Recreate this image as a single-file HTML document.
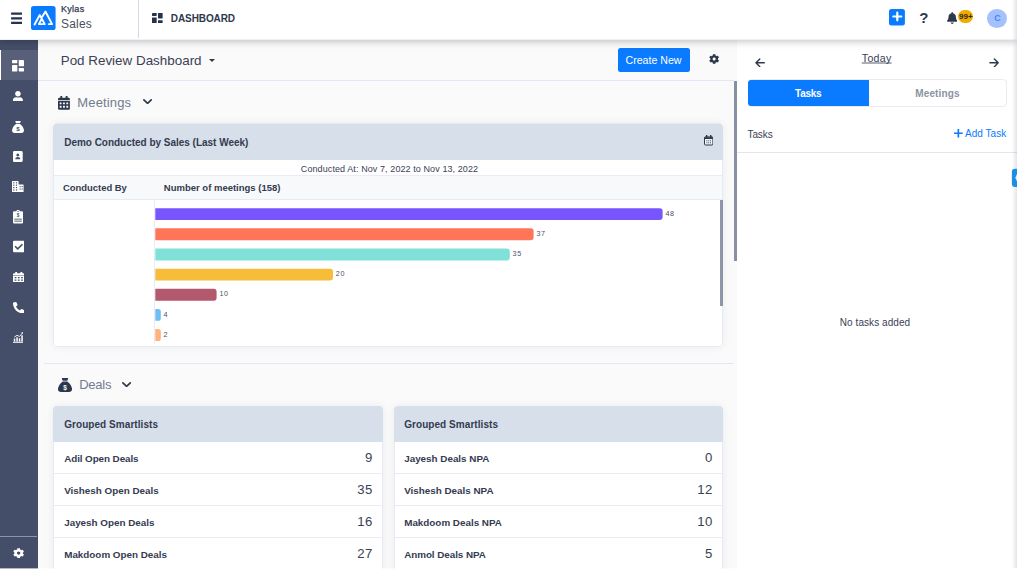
<!DOCTYPE html>
<html lang="en">
<head>
<meta charset="utf-8">
<title>Kylas Sales - Dashboard</title>
<style>
*{box-sizing:border-box;margin:0;padding:0}
html,body{width:1024px;height:585px;overflow:hidden;background:#fff}
body{font-family:"Liberation Sans",sans-serif;color:#2e384d;position:relative}
#app{position:absolute;left:0;top:0;width:1017px;height:569px;overflow:hidden;background:#fff}
.abs{position:absolute}
/* header */
#hdr{position:absolute;left:0;top:0;width:1017px;height:40px;background:#fff;border-bottom:1px solid #eff1fc;z-index:5;box-shadow:0 2px 7px rgba(0,0,0,.22)}
#hdr .burger{position:absolute;left:11px;top:12.5px;width:11px;height:11.5px}
#hdr .burger i{position:absolute;left:0;width:11px;height:2.100px;background:#2e384d;border-radius:.5px}
#logo{position:absolute;left:31px;top:6px;width:25px;height:24px;border-radius:3px;background:#0a7aff}
.brand1{position:absolute;left:61px;top:2.6px;font-size:9px;line-height:12px;color:#2e384d;letter-spacing:.28px;-webkit-text-stroke:.25px #2e384d}
.brand2{position:absolute;left:61px;top:15.6px;font-size:12px;line-height:16px;color:#4a5060;letter-spacing:.2px}
.vdiv{position:absolute;left:138px;top:0;width:1px;height:38px;background:#d5d8e6}
.dashico{position:absolute;left:152px;top:12.5px;width:11px;height:10.5px}
.dashtxt{position:absolute;left:170.8px;top:13px;font-size:10px;line-height:12px;font-weight:bold;color:#2e384d;letter-spacing:-.09px}
/* sidebar */
#side{position:absolute;left:0;top:40px;width:38px;height:529px;background:#454e68}
#side .act{position:absolute;left:0;top:10px;width:38px;height:30px;background:#586079;border-left:1.5px solid #fff}
#side .sep{position:absolute;left:0;top:496px;width:37px;height:1px;background:#8d94a8}
/* main */
#main{position:absolute;left:38px;top:40px;width:699px;height:529px;background:#fafafa}
#right{position:absolute;left:737px;top:40px;width:280px;height:528px;background:#fff}
.hline{position:absolute;height:1px;background:#e3e6f4}
.title{position:absolute;left:60.700px;top:52px;font-size:13.4px;line-height:18px;color:#3a4156;letter-spacing:.01px}
.sect{position:absolute;font-size:13px;line-height:18px;color:#737b8f}
.btn{position:absolute;left:617.5px;top:48px;width:72px;height:24px;border-radius:2.5px;background:#0a7aff;color:#fff;font-size:10.6px;line-height:25px;text-align:center}
.card{position:absolute;background:#fff;border-radius:4px;overflow:hidden;box-shadow:0 0 8px rgba(30,40,70,.07)}
.card>.in{position:absolute;left:1px;top:1px;right:1px;bottom:1px}
.card>.bd{position:absolute;left:0;right:0;bottom:0;border:1px solid #e6e9f6;border-top:0;border-radius:0 0 4px 4px}
.card .ch{position:absolute;left:-1px;top:-1px;right:-1px;background:#d6dfea}
.ch span{position:absolute;left:10.2px;font-size:10px;font-weight:bold;color:#343b50;white-space:nowrap}
.row{position:absolute;left:0;right:0;height:32px;border-top:1px solid #e9ecf7}
.row b{position:absolute;left:9.200px;top:11px;font-size:9.85px;line-height:12px;color:#343b50;white-space:nowrap}
.row em{position:absolute;right:9.200px;top:8px;font-style:normal;letter-spacing:.4px;font-size:13.2px;line-height:16px;color:#3a4156}
.bar{position:absolute;left:155.5px;height:12px;border-radius:0 3px 3px 0}
.bl{position:absolute;font-size:7.2px;line-height:10px;color:#4a5166;letter-spacing:.7px}
.sh .row b{left:10.200px}
.sh .ch span{left:11.200px}
</style>
</head>
<body>
<div id="app">
  <div id="main"></div>
  <div id="right"></div>

  <!-- main content (page coordinates) -->
  <div class="title">Pod Review Dashboard</div>
  <div class="abs" style="left:208.800px;top:59.400px;width:0;height:0;border-left:3.300px solid transparent;border-right:3.300px solid transparent;border-top:3.200px solid #2e384d"></div>
  <div class="btn">Create New</div>
  <div class="hline" style="left:38px;top:80px;width:696px"></div>
  <div class="abs" style="left:734px;top:81px;width:3px;height:180px;background:#8a90a4"></div>

  <div class="sect" style="left:77.3px;top:93.6px;letter-spacing:.15px">Meetings</div>

  <div class="card sh" style="left:53px;top:123px;width:670px;height:224px;border-radius:5px"><div class="in" style="top:2px">
    <div class="ch" style="height:37px;top:-2px;border-top:1px solid #e6ebf2"><span style="top:13px;line-height:12px;letter-spacing:-.02px">Demo Conducted by Sales (Last Week)</span></div>
    <div class="abs" style="left:0;right:0;top:35.700px;height:16px;padding-left:3px;text-align:center;font-size:9px;letter-spacing:.09px;line-height:16px;color:#3a4156">Conducted At: Nov 7, 2022 to Nov 13, 2022</div>
    <div class="abs" style="left:0;right:0;top:50px;height:25px;background:#f8f9fb;border-top:1px solid #e9ecf7;border-bottom:1px solid #e9ecf7"></div>
    <div class="abs" style="left:8.900px;top:57px;font-size:9.450px;line-height:12px;font-weight:bold;color:#343b50">Conducted By</div>
    <div class="abs" style="left:109.800px;top:57px;font-size:9.500px;line-height:12px;font-weight:bold;color:#343b50">Number of meetings (158)</div>
    <div class="abs" style="left:100px;top:75px;width:1px;height:144px;background:#e9ecf7"></div>
  </div><div class="bd" style="top:37px"></div></div>
  <svg class="abs" style="left:150px;top:200px" width="530" height="146" viewBox="150 200 530 146">
    <path fill="#7856ff" d="M155.3 208.20H659.60a3 3 0 0 1 3 3v5.90a3 3 0 0 1 -3 3H155.3z"/>
    <path fill="#ff7557" d="M155.3 228.35H530.60a3 3 0 0 1 3 3v5.90a3 3 0 0 1 -3 3H155.3z"/>
    <path fill="#80e1d9" d="M155.3 248.50H506.80a3 3 0 0 1 3 3v5.90a3 3 0 0 1 -3 3H155.3z"/>
    <path fill="#f8bc3b" d="M155.3 268.65H330.00a3 3 0 0 1 3 3v5.90a3 3 0 0 1 -3 3H155.3z"/>
    <path fill="#b2596e" d="M155.3 288.80H213.60a3 3 0 0 1 3 3v5.90a3 3 0 0 1 -3 3H155.3z"/>
    <path fill="#72bef4" d="M155.3 308.95H158.20a2.6 2.6 0 0 1 2.6 2.6v6.70a2.6 2.6 0 0 1 -2.6 2.6H155.3z"/>
    <path fill="#ffb27a" d="M155.3 329.10H158.20a2.6 2.6 0 0 1 2.6 2.6v6.70a2.6 2.6 0 0 1 -2.6 2.6H155.3z"/>
  </svg>
  <div class="bl" style="left:665.4px;top:208.7px">48</div>
  <div class="bl" style="left:536.4px;top:228.7px">37</div>
  <div class="bl" style="left:512.6px;top:248.7px">35</div>
  <div class="bl" style="left:335.8px;top:268.7px">20</div>
  <div class="bl" style="left:219.4px;top:288.7px">10</div>
  <div class="bl" style="left:163.6px;top:309.7px">4</div>
  <div class="bl" style="left:163.6px;top:329.7px">2</div>
  <div class="abs" style="left:720px;top:200px;width:3px;height:106px;background:#8f95a9"></div>

  <div class="hline" style="left:44px;top:363px;width:690px"></div>
  <div class="sect" style="left:79.2px;top:375.8px;letter-spacing:-.26px">Deals</div>

  <div class="card sh" style="left:53px;top:406px;width:330px;height:180px"><div class="in">
    <div class="ch" style="height:36px"><span style="top:13px;line-height:12px;font-size:10px;letter-spacing:.06px">Grouped Smartlists</span></div>
    <div class="row" style="top:34px;border-top-color:transparent"><b style="letter-spacing:-.08px">Adil Open Deals</b><em>9</em></div>
    <div class="row" style="top:66px"><b>Vishesh Open Deals</b><em>35</em></div>
    <div class="row" style="top:98px"><b>Jayesh Open Deals</b><em>16</em></div>
    <div class="row" style="top:130px"><b>Makdoom Open Deals</b><em>27</em></div>
  </div><div class="bd" style="top:36px"></div></div>
  <div class="card" style="left:394px;top:406px;width:329px;height:180px"><div class="in">
    <div class="ch" style="height:36px"><span style="top:13px;line-height:12px;font-size:10px;letter-spacing:.06px">Grouped Smartlists</span></div>
    <div class="row" style="top:34px;border-top-color:transparent"><b>Jayesh Deals NPA</b><em>0</em></div>
    <div class="row" style="top:66px"><b>Vishesh Deals NPA</b><em>12</em></div>
    <div class="row" style="top:98px"><b>Makdoom Deals NPA</b><em>10</em></div>
    <div class="row" style="top:130px"><b style="letter-spacing:-.05px">Anmol Deals NPA</b><em>5</em></div>
  </div><div class="bd" style="top:36px"></div></div>

  <svg class="abs" style="left:708.6px;top:54.4px" width="10.3" height="10.1" viewBox="0 0 512 512" preserveAspectRatio="none"><path fill="#2e384d" d="M487.4 315.7l-42.6-24.6c4.3-23.2 4.3-47 0-70.2l42.6-24.6c4.9-2.8 7.1-8.600 5.500-14-11.100-35.600-30-67.800-54.700-94.600-3.800-4.100-10-5.100-14.800-2.300L380.800 110c-17.900-15.400-38.500-27.300-60.800-35.100V25.800c0-5.600-3.900-10.500-9.400-11.700-36.700-8.200-74.300-7.800-109.200 0-5.500 1.200-9.400 6.100-9.400 11.700V75c-22.200 7.900-42.800 19.800-60.800 35.100L88.700 85.500c-4.900-2.800-11-1.900-14.800 2.300-24.700 26.700-43.600 58.900-54.700 94.600-1.700 5.400.6 11.200 5.500 14L67.300 221c-4.300 23.200-4.300 47 0 70.200l-42.600 24.600c-4.900 2.800-7.100 8.600-5.500 14 11.100 35.600 30 67.800 54.700 94.600 3.800 4.100 10 5.100 14.800 2.300l42.600-24.600c17.900 15.400 38.500 27.300 60.800 35.100v49.200c0 5.600 3.900 10.500 9.400 11.700 36.700 8.200 74.300 7.800 109.200 0 5.500-1.200 9.400-6.100 9.400-11.700v-49.200c22.200-7.900 42.800-19.800 60.800-35.100l42.600 24.600c4.900 2.800 11 1.900 14.800-2.300 24.700-26.700 43.600-58.900 54.700-94.600 1.500-5.500-.7-11.300-5.600-14.100zM256 336c-44.100 0-80-35.900-80-80s35.900-80 80-80 80 35.900 80 80-35.900 80-80 80z"/></svg>
  <svg class="abs" style="left:58px;top:96px" width="11.9" height="13.7" viewBox="0 0 12 14" preserveAspectRatio="none"><path fill="#2e384d" d="M2.6 0h1.4a.3.3 0 0 1 .3.3V1.700h3.400V.3a.3.3 0 0 1 .3-.3h1.400a.3.300 0 0 1 .3.300V1.700h1.000A1.300 1.300 0 0 1 12 3v1.300H0V3a1.300 1.300 0 0 1 1.300-1.300h1V.3a.3.300 0 0 1 .3-.3zM0 5.100h12v7.600A1.300 1.300 0 0 1 10.700 14H1.300A1.300 1.300 0 0 1 0 12.700z"/><rect x="1.7" y="6.6" width="1.900" height="1.900" rx=".25" fill="#f8f9fa"/><rect x="5.05" y="6.6" width="1.900" height="1.900" rx=".25" fill="#f8f9fa"/><rect x="8.4" y="6.6" width="1.900" height="1.900" rx=".25" fill="#f8f9fa"/><rect x="1.7" y="10.0" width="1.900" height="1.900" rx=".25" fill="#f8f9fa"/><rect x="5.05" y="10.0" width="1.900" height="1.900" rx=".25" fill="#f8f9fa"/><rect x="8.4" y="10.0" width="1.900" height="1.900" rx=".25" fill="#f8f9fa"/></svg>
  <svg class="abs" style="left:142.6px;top:99.1px" width="9.1" height="5.3" viewBox="0 0 9.100 5.300" ><path d="M.900.900L4.550 4.300L8.200.900" fill="none" stroke="#2e384d" stroke-width="1.700" stroke-linecap="round" stroke-linejoin="round"/></svg>
  <svg class="abs" style="left:58px;top:378px" width="14" height="14" viewBox="0 0 12 12" ><path fill="#2e384d" d="M3.600 0h4.800c.300 0 .450.300.300.550L7.900 2.300H4.100L3.300.55C3.150.3 3.300 0 3.600 0z"/><path fill="#2e384d" d="M4.000 3.000h4.000C9.800 4.300 12 7.100 12 9.600c0 1.500-1.100 2.400-2.500 2.400h-7C1.100 12 0 11.100 0 9.600 0 7.100 2.200 4.300 4.000 3.000z"/><text x="6" y="10.100" font-family="Liberation Sans, sans-serif" font-weight="bold" font-size="5.600" text-anchor="middle" fill="#f8f9fa">$</text></svg>
  <svg class="abs" style="left:121.7px;top:381.5px" width="9.2" height="5.4" viewBox="0 0 9.100 5.300" preserveAspectRatio="none"><path d="M.900.900L4.550 4.300L8.200.900" fill="none" stroke="#2e384d" stroke-width="1.700" stroke-linecap="round" stroke-linejoin="round"/></svg>
  <svg class="abs" style="left:703.900px;top:135.200px" width="9.400" height="10.500" viewBox="0 0 9.400 10.500"><rect x=".500" y="1.900" width="8.400" height="8.100" rx=".900" fill="#f0f4f9" stroke="#2e384d" stroke-width="1"/><path fill="#2e384d" d="M.500 2.200h8.400v1.700H.500zM2.100 0l1.300 0v2.200H1.700zM6 0h1.300l.400 2.200H6z"/><rect x="2.4" y="5.3" width="1" height="1" fill="#4a5470"/><rect x="4.2" y="5.3" width="1" height="1" fill="#4a5470"/><rect x="6" y="5.3" width="1" height="1" fill="#4a5470"/><rect x="2.4" y="7.3" width="1" height="1" fill="#4a5470"/><rect x="4.2" y="7.3" width="1" height="1" fill="#4a5470"/><rect x="6" y="7.3" width="1" height="1" fill="#4a5470"/></svg>
  <svg class="abs" style="left:755px;top:57.7px" width="10.2" height="9.6" viewBox="0 0 10.200 9.600" ><path d="M9.300 4.800H1.200M4.800.900L1 4.800L4.800 8.700" fill="none" stroke="#2e384d" stroke-width="1.400" stroke-linecap="round" stroke-linejoin="round"/></svg>
  <svg class="abs" style="left:989px;top:57.7px" width="10.2" height="9.6" viewBox="0 0 10.200 9.600" ><g transform="translate(10.200 0) scale(-1 1)"><path d="M9.300 4.800H1.200M4.800.900L1 4.800L4.800 8.700" fill="none" stroke="#2e384d" stroke-width="1.400" stroke-linecap="round" stroke-linejoin="round"/></g></svg>
  <svg class="abs" style="left:954.1px;top:129.2px" width="8.7" height="8.5" viewBox="0 0 8.700 8.500" ><path d="M0 4.250h8.700M4.350 0v8.500" stroke="#0a7bff" stroke-width="1.700"/></svg>
  <!-- right panel -->
  <div class="abs" style="left:861.8px;top:51.2px;font-size:10.6px;letter-spacing:.3px;line-height:14px;color:#3a4156;text-decoration:underline;text-decoration-color:rgba(58,65,86,.42);text-decoration-thickness:1.700px;text-underline-offset:.200px;text-decoration-skip-ink:none">Today</div>
  <div class="abs" style="left:748px;top:79px;width:259px;height:28px;border:1px solid #e9ebf0;border-radius:4px;background:#fff"></div>
  <div class="abs" style="left:748px;top:80px;width:120.5px;height:26px;border-radius:3px 0 0 3px;background:#0a7aff;color:#fff;font-weight:bold;font-size:10px;letter-spacing:-.25px;line-height:28px;text-align:center">Tasks</div>
  <div class="abs" style="left:868.5px;top:80px;width:138px;height:26px;color:#8b93a2;font-weight:bold;font-size:10px;letter-spacing:.15px;line-height:28px;text-align:center">Meetings</div>
  <div class="abs" style="left:747.500px;top:128px;letter-spacing:-.1px;font-size:10px;line-height:14px;color:#3a4156">Tasks</div>
  <div class="abs" style="left:965px;top:127px;font-size:10px;letter-spacing:.04px;line-height:14px;color:#0a7aff">Add Task</div>
  <div class="abs" style="left:737px;top:152px;width:280px;height:1px;background:#e3e5ea"></div>
  <div class="abs" style="left:737px;top:315.8px;width:276px;text-align:center;font-size:10px;letter-spacing:.06px;line-height:14px;color:#3a4156">No tasks added</div>
  <svg class="abs" style="left:1011px;top:168px;z-index:10" width="6" height="20" viewBox="1011 168 6 20"><path fill="#1b8fe4" d="M1017 168.700h-2.100a3 3 0 0 0 -3 3v12.200a3 3 0 0 0 3 3h2.100v-5.400l-1.700 -3.700l1.700 -3.700z"/></svg>
  <div class="abs" style="left:1012px;top:0;width:5px;height:568px;z-index:9;background:linear-gradient(90deg,rgba(60,70,110,0),rgba(60,70,110,.14))"></div>
  <div id="side">
    <div class="act"></div>
    <div class="sep"></div>
    <svg class="abs" style="left:12.3px;top:20.300px" width="12" height="11.400" viewBox="0 0 10.650 10.100" preserveAspectRatio="none"><rect x="0" y="0" width="4.700" height="2.900" rx=".400" fill="#fff"/><rect x="0" y="4.400" width="4.700" height="5.700" rx=".400" fill="#fff"/><rect x="6" y="0" width="4.650" height="5.450" rx=".400" fill="#fff"/><rect x="6" y="7.200" width="4.650" height="2.900" rx=".400" fill="#fff"/></svg>
    <svg class="abs" style="left:13.4px;top:50.6px" width="9.9" height="10.9" viewBox="0 0 448 512" preserveAspectRatio="none"><path fill="#fff" d="M224 256c70.7 0 128-57.3 128-128S294.7 0 224 0 96 57.3 96 128s57.3 128 128 128zm89.6 32h-16.7c-22.2 10.2-46.9 16-72.9 16s-50.6-5.8-72.9-16h-16.7C60.2 288 0 348.2 0 422.400V464c0 26.5 21.5 48 48 48h352c26.500 0 48-21.5 48-48v-41.600c0-74.200-60.200-134.400-134.400-134.400z"/></svg>
    <svg class="abs" style="left:12.2px;top:80.7px" width="12" height="12" viewBox="0 0 12 12" ><path fill="#fff" d="M3.600 0h4.800c.300 0 .450.300.300.550L7.900 2.300H4.100L3.300.55C3.150.3 3.300 0 3.600 0z"/><path fill="#fff" d="M4.000 3.000h4.000C9.800 4.300 12 7.100 12 9.600c0 1.500-1.100 2.400-2.500 2.400h-7C1.100 12 0 11.100 0 9.600 0 7.100 2.200 4.300 4.000 3.000z"/><text x="6" y="10.300" font-family="Liberation Sans, sans-serif" font-weight="bold" font-size="6.200" text-anchor="middle" fill="#454e68">$</text></svg>
    <svg class="abs" style="left:13px;top:110.8px" width="10.2" height="11" viewBox="0 0 10.200 11" ><path fill="#fff" d="M1.300 0h7A1.300 1.300 0 0 1 9.600 1.300v8.400A1.300 1.300 0 0 1 8.300 11h-7A1.300 1.300 0 0 1 0 9.700V1.300A1.300 1.300 0 0 1 1.300 0z"/><path fill="#fff" d="M9.600 1.400h.300a.300.300 0 0 1 .300.300v1.700a.300.300 0 0 1-.300.300h-.300zM9.600 4.300h.300a.300.300 0 0 1 .300.300v1.700a.300.300 0 0 1-.300.300h-.300zM9.600 7.200h.300a.300.300 0 0 1 .300.300v1.700a.300.300 0 0 1-.300.300h-.300z"/><circle cx="4.800" cy="4.100" r="1.500" fill="#454e68"/><path fill="#454e68" d="M2.300 8.300c0-1.500 1-2.200 2.500-2.200s2.500.700 2.500 2.200z"/></svg>
    <svg class="abs" style="left:12.4px;top:141px" width="11.6" height="10.9" viewBox="0 0 11.600 10.900" ><path fill="#fff" d="M.400 0h5.800a.400.400 0 0 1 .400.400V3.600h4.600a.400.400 0 0 1 .400.400v6.900H0V.400A.400.400 0 0 1 .400 0z"/><rect x="1.2" y="1.2" width="1.200" height="1.200" fill="#454e68"/><rect x="3.9" y="1.2" width="1.200" height="1.200" fill="#454e68"/><rect x="1.2" y="3.6" width="1.200" height="1.200" fill="#454e68"/><rect x="3.9" y="3.6" width="1.200" height="1.200" fill="#454e68"/><rect x="1.2" y="6.0" width="1.200" height="1.200" fill="#454e68"/><rect x="3.9" y="6.0" width="1.200" height="1.200" fill="#454e68"/><rect x="1.2" y="8.4" width="1.200" height="1.200" fill="#454e68"/><rect x="3.9" y="8.4" width="1.200" height="1.200" fill="#454e68"/><rect x="7.6" y="5.1" width="1.100" height="1.100" fill="#454e68"/><rect x="9.6" y="5.1" width="1.100" height="1.100" fill="#454e68"/><rect x="7.6" y="7.5" width="1.100" height="1.100" fill="#454e68"/><rect x="9.6" y="7.5" width="1.100" height="1.100" fill="#454e68"/></svg>
    <svg class="abs" style="left:13px;top:170.3px" width="10.2" height="13.5" viewBox="0 0 10.200 13.500" ><path fill="#fff" d="M1.200 1.300h2.300a1.600 1.600 0 0 1 3.200 0h2.300a1.200 1.200 0 0 1 1.200 1.200v9.800a1.200 1.200 0 0 1-1.200 1.200H1.200A1.200 1.200 0 0 1 0 12.300V2.500a1.200 1.200 0 0 1 1.200-1.200z"/><circle cx="5.100" cy="1.400" r=".600" fill="#454e68"/><text x="5.100" y="7.300" font-family="Liberation Sans, sans-serif" font-weight="bold" font-size="4.600" text-anchor="middle" fill="#454e68">$</text><rect x="1.300" y="8.600" width="7.600" height="1.100" fill="#454e68" opacity=".8"/><rect x="1.300" y="10.600" width="7.600" height="1.100" fill="#454e68" opacity=".8"/></svg>
    <svg class="abs" style="left:12.5px;top:200.2px" width="11.5" height="13.1" viewBox="0 0 448 512" preserveAspectRatio="none"><path fill="#fff" d="M400 480H48c-26.510 0-48-21.490-48-48V80c0-26.510 21.490-48 48-48h352c26.510 0 48 21.490 48 48v352c0 26.510-21.490 48-48 48zm-204.686-98.059l184-184c6.248-6.248 6.248-16.379 0-22.627l-22.627-22.627c-6.248-6.248-16.379-6.249-22.628 0L184 302.745l-70.059-70.059c-6.248-6.248-16.379-6.248-22.628 0l-22.627 22.627c-6.248 6.248-6.248 16.379 0 22.627l104 104c6.249 6.250 16.379 6.250 22.628.001z"/></svg>
    <svg class="abs" style="left:12.5px;top:232px" width="11.5" height="10.4" viewBox="0 0 12 14" preserveAspectRatio="none"><path fill="#fff" d="M2.6 0h1.4a.3.3 0 0 1 .3.3V1.700h3.400V.3a.3.3 0 0 1 .3-.3h1.400a.3.300 0 0 1 .3.300V1.700h1.000A1.300 1.300 0 0 1 12 3v1.300H0V3a1.300 1.300 0 0 1 1.300-1.300h1V.3a.3.300 0 0 1 .3-.3zM0 5.100h12v7.600A1.300 1.300 0 0 1 10.700 14H1.300A1.300 1.300 0 0 1 0 12.700z"/><rect x="1.7" y="6.6" width="1.900" height="1.900" rx=".25" fill="#454e68"/><rect x="5.05" y="6.6" width="1.900" height="1.900" rx=".25" fill="#454e68"/><rect x="8.4" y="6.6" width="1.900" height="1.900" rx=".25" fill="#454e68"/><rect x="1.7" y="10.0" width="1.900" height="1.900" rx=".25" fill="#454e68"/><rect x="5.05" y="10.0" width="1.900" height="1.900" rx=".25" fill="#454e68"/><rect x="8.4" y="10.0" width="1.900" height="1.900" rx=".25" fill="#454e68"/></svg>
    <svg class="abs" style="left:12.5px;top:261.5px" width="11.5" height="11.5" viewBox="0 0 512 512" ><path fill="#fff" d="M497.39 361.8l-112-48a24 24 0 0 0-28 6.9l-49.6 60.6A370.66 370.66 0 0 1 130.6 204.11l60.6-49.6a23.94 23.94 0 0 0 6.9-28l-48-112A24.16 24.16 0 0 0 122.6.61l-104 24A24 24 0 0 0 0 48c0 256.500 207.900 464 464 464a24 24 0 0 0 23.400-18.600l24-104a24.290 24.290 0 0 0-14.010-27.600z"/></svg>
    <svg class="abs" style="left:12.8px;top:292px" width="10.7" height="10.8" viewBox="0 0 10.700 10.800" ><g fill="#fff"><rect x="0" y="9.800" width="10.700" height="1"/><rect x=".800" y="6.600" width="1.500" height="3"/><rect x="3.300" y="5.300" width="1.500" height="4.300"/><rect x="5.800" y="6.300" width="1.500" height="3.300"/><rect x="8.300" y="3.300" width="1.500" height="6.300"/></g><path d="M1.300 5.100L4 3.300l2.500 1.200L9.600.800" fill="none" stroke="#fff" stroke-width=".900"/><path fill="#fff" d="M8.200.2h2.300v2.300z"/></svg>
    <svg class="abs" style="left:12.7px;top:507.9px" width="11.3" height="10.2" viewBox="0 0 512 512" preserveAspectRatio="none"><path fill="#fff" d="M487.4 315.7l-42.6-24.6c4.3-23.2 4.3-47 0-70.2l42.6-24.6c4.9-2.8 7.1-8.600 5.500-14-11.100-35.600-30-67.800-54.700-94.600-3.800-4.100-10-5.100-14.800-2.300L380.800 110c-17.900-15.400-38.500-27.300-60.800-35.100V25.800c0-5.600-3.900-10.500-9.400-11.700-36.700-8.200-74.300-7.800-109.200 0-5.500 1.200-9.400 6.100-9.400 11.700V75c-22.200 7.900-42.800 19.800-60.800 35.100L88.700 85.500c-4.900-2.800-11-1.900-14.800 2.300-24.700 26.700-43.600 58.900-54.700 94.600-1.700 5.400.6 11.200 5.500 14L67.300 221c-4.300 23.200-4.300 47 0 70.200l-42.600 24.600c-4.900 2.800-7.100 8.600-5.500 14 11.100 35.600 30 67.800 54.700 94.600 3.800 4.100 10 5.100 14.800 2.300l42.600-24.600c17.900 15.400 38.500 27.300 60.800 35.100v49.200c0 5.600 3.900 10.500 9.400 11.700 36.700 8.200 74.300 7.800 109.200 0 5.500-1.200 9.400-6.100 9.400-11.700v-49.200c22.200-7.900 42.800-19.800 60.800-35.100l42.600 24.600c4.900 2.800 11 1.900 14.800-2.300 24.700-26.700 43.600-58.900 54.700-94.600 1.500-5.500-.7-11.300-5.600-14.100zM256 336c-44.100 0-80-35.900-80-80s35.900-80 80-80 80 35.900 80 80-35.900 80-80 80z"/></svg>
  </div>
  <div class="abs" style="left:0;top:568px;width:1017px;height:1px;background:rgba(255,255,255,.6);z-index:20"></div>
  <div id="hdr">
    <svg class="abs" style="left:11px;top:12px" width="12" height="13" viewBox="11 12 12 13"><path fill="#26324e" d="M11.100 12.500h10.900v2.200H11.100zM11.100 17.200h10.900v2.200H11.100zM11.100 21.800h10.900v2.200H11.100z"/></svg>
    <svg class="abs" style="left:31.2px;top:5.8px" width="24.6" height="24" viewBox="0 0 24.6 24" ><rect width="24.6" height="24" rx="2.600" fill="#0a7bff"/><path d="M3.550 18.500L8.750 9.050L13.700 18.100H7.900L10.600 13.000M11.200 10.700L14.500 5.500L21.050 18.100H17.800" fill="none" stroke="#fff" stroke-width="1.900" stroke-linecap="round" stroke-linejoin="round"/></svg>
    <svg class="abs" style="left:152.100px;top:12.800px" width="10.650" height="10.100" viewBox="0 0 10.650 10.100"><rect x="0" y="0" width="4.700" height="2.900" rx=".400" fill="#26324e"/><rect x="0" y="4.400" width="4.700" height="5.700" rx=".400" fill="#26324e"/><rect x="6" y="0" width="4.650" height="5.450" rx=".400" fill="#26324e"/><rect x="6" y="7.200" width="4.650" height="2.900" rx=".400" fill="#26324e"/></svg>
    <svg class="abs" style="left:888.9px;top:9.4px" width="15.9" height="16.6" viewBox="0 0 15.900 16.600" ><rect width="15.900" height="16.600" rx="2.500" fill="#0a7bff"/><path d="M4.300 7.500h8M8.300 3.700v7.600" stroke="#fff" stroke-width="2.200" stroke-linecap="round"/></svg>
    <div class="abs" style="left:919.3px;top:8.600px;font-size:15px;line-height:18px;font-weight:bold;color:#2e384d">?</div>
    <svg class="abs" style="left:947px;top:11.9px" width="10.4" height="11.9" viewBox="0 0 448 512" preserveAspectRatio="none"><path fill="#2e384d" d="M224 512c35.320 0 63.970-28.650 63.970-64H160.030c0 35.350 28.650 64 63.970 64zm215.390-149.710c-19.320-20.760-55.470-51.990-55.470-154.290 0-77.700-54.480-139.900-127.940-155.160V32c0-17.670-14.320-32-31.980-32s-31.980 14.330-31.980 32v20.840C118.560 68.100 64.080 130.300 64.080 208c0 102.300-36.150 133.530-55.470 154.290-6 6.450-8.660 14.160-8.610 21.710.11 16.400 12.980 32 32.100 32h383.800c19.120 0 32-15.600 32.100-32 .05-7.550-2.610-15.270-8.610-21.710z"/></svg>
    <div class="abs" style="left:957.6px;top:9.500px;width:15.300px;height:13.500px;border-radius:7px;background:#f1ab00;font-size:8px;line-height:13.400px;font-weight:bold;color:#2d2a16;text-align:left;letter-spacing:0;white-space:nowrap;text-indent:1.400px">99+</div>
    <div class="abs" style="left:987.4px;top:8.700px;width:19.300px;height:19px;border-radius:50%;background:#a4c1fb;font-size:9.800px;font-weight:bold;line-height:18.800px;color:#3d8bfd;text-align:center"><span style="display:inline-block;transform:scaleX(.9)">C</span></div>
    <div class="brand1">Kylas</div>
    <div class="brand2">Sales</div>
    <div class="vdiv"></div>
    <div class="dashtxt">DASHBOARD</div>
  </div>
</div>
</body>
</html>
